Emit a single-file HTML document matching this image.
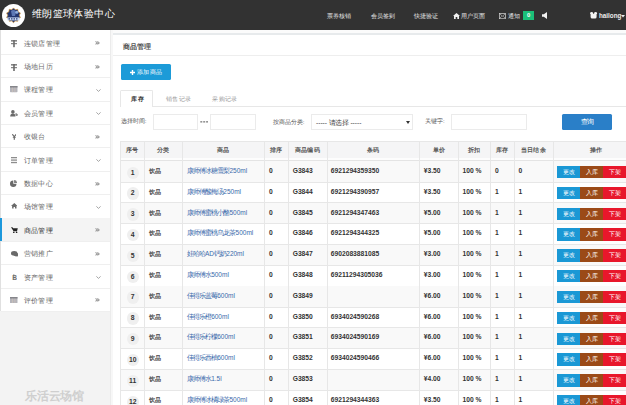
<!DOCTYPE html><html><head><meta charset="utf-8"><style>
*{margin:0;padding:0;box-sizing:border-box}
html,body{width:626px;height:405px;overflow:hidden;background:#f3f3f3;font-family:"Liberation Sans",sans-serif;position:relative}
.a{position:absolute;white-space:nowrap}
i{display:inline-block;width:1em;font-style:normal;text-align:center}
.nocjk i{-webkit-text-fill-color:transparent;position:relative}
.nocjk i::before{content:'';position:absolute;left:.08em;right:.08em;bottom:.1em;height:.94em;background:currentColor;opacity:.36}
#hdr{left:0;top:0;width:626px;height:29.5px;background:#323232}
.nav{color:#e8e8e8;font-size:6.1px;top:12.4px;line-height:7px}
#side{left:0;top:29.5px;width:110.3px;height:281.3px;background:#fff;border-left:1.4px solid #e0e0e0}
.sep{left:1.4px;width:109px;height:1px;background:#efefef}
.stxt{color:#666;font-size:7.1px;line-height:8px}
.sico{color:#666;font-size:7px;line-height:8px}
.sarr{color:#999;font-size:7px;line-height:8px}
#strip{left:110.3px;top:29.5px;width:2.6px;height:376px;background:#f7f7f7}
#panel{left:112.9px;top:33.1px;width:514px;height:380px;background:#fff;border-top:2px solid #e7eaec}
.th{background:#f5f5f6}
.cell{font-size:6.7px;color:#333;font-weight:bold;line-height:8px}
.cj{font-size:6.2px;color:#4a4a4a;font-weight:bold;line-height:8px}
.lnk{font-size:6.5px;color:#3a6aab;line-height:8px}
.lnk i{width:.94em}
.vl{width:1px;background:#e7e7e7}
.hl{height:1px;background:#e7e7e7}
.badge{width:12.4px;height:12.4px;border-radius:50%;background:#efefef;color:#333;font-size:6.8px;font-weight:bold;line-height:12.4px;text-align:center}
.btn{height:12.4px;color:#fff;font-size:6px;line-height:12.4px;text-align:center}
.inp{border:1px solid #ebebeb;background:#fff;height:15.4px}
.lbl{font-size:6px;color:#555;line-height:7px}
</style></head><body>
<div id="hdr" class="a"></div>
<div class="a" style="left:1.9px;top:3.5px;width:23.6px;height:23.6px;border-radius:50%;background:#fff"></div>
<svg class="a" style="left:6px;top:7px" width="15" height="17" viewBox="0 0 15 17"><polygon points="7.50,0.90 9.29,2.69 11.76,2.31 12.18,4.83 14.40,6.01 13.28,8.30 14.40,10.59 12.18,11.77 11.76,14.29 9.29,13.91 7.50,15.70 5.71,13.91 3.24,14.29 2.82,11.77 0.60,10.59 1.72,8.30 0.60,6.01 2.82,4.83 3.24,2.31 5.71,2.69" fill="#22356f" stroke="#d99a3c" stroke-width="0.7"/><path d="M5 4 Q7.5 2 10 4.5 L9 9 L6 9 Z" fill="#5d78b4"/><circle cx="10.8" cy="5.2" r="1.5" fill="#8fb0e0"/><rect x="1.4" y="10.4" width="12.2" height="3" fill="#c9d9f2"/><path d="M2.5 11.2 h1.5 v1.4 h-1.5z M5 11.2 h1.5 v1.4 h-1.5z M7.5 11.2 h1.5 v1.4 h-1.5z M10 11.2 h1.5 v1.4 h-1.5z" fill="#2a3d78"/></svg>
<div class="a" style="left:31.6px;top:8.4px;color:#fff;font-size:10.4px;line-height:12px"><i>维</i><i>朗</i><i>篮</i><i>球</i><i>体</i><i>验</i><i>中</i><i>心</i></div>
<div class="a nav" style="left:326.6px"><i>票</i><i>券</i><i>核</i><i>销</i></div>
<div class="a nav" style="left:370.5px"><i>会</i><i>员</i><i>签</i><i>到</i></div>
<div class="a nav" style="left:413.8px"><i>快</i><i>捷</i><i>验</i><i>证</i></div>
<div class="a nav" style="left:460.5px"><i>用</i><i>户</i><i>页</i><i>面</i></div>
<div class="a nav" style="left:507.5px"><i>通</i><i>知</i></div>
<svg class="a" style="left:453px;top:12.6px" width="7" height="6" viewBox="0 0 7 6"><path d="M3.5 0 L7 3 L6 3 L6 6 L4.3 6 L4.3 4 L2.7 4 L2.7 6 L1 6 L1 3 L0 3 Z" fill="#f0f0f0"/></svg>
<svg class="a" style="left:499px;top:12.7px" width="7" height="6.2" viewBox="0 0 7 6.2"><rect x="0.45" y="0.45" width="6.1" height="5.3" fill="none" stroke="#d8d8d8" stroke-width="0.7"/><path d="M0.7 0.9 L3.5 3.1 L6.3 0.9 M0.8 5.3 L2.7 3.3 M6.2 5.3 L4.3 3.3" fill="none" stroke="#d0d0d0" stroke-width="0.6"/></svg>
<div class="a" style="left:523.2px;top:10.7px;width:11.1px;height:9px;background:#1bbf79;color:#fff;font-size:5.8px;font-weight:bold;line-height:9px;text-align:center">0</div>
<svg class="a" style="left:541.5px;top:12.2px" width="5.5" height="7" viewBox="0 0 5.5 7"><path d="M0 2.2 L1.8 2.2 L5 0 L5 7 L1.8 4.8 L0 4.8 Z" fill="#f2f2f2"/></svg>
<svg class="a" style="left:590.4px;top:12.4px" width="7.2" height="6.6" viewBox="0 0 7.2 6.6"><circle cx="1.6" cy="1.6" r="1.5" fill="#f4f4f4"/><circle cx="5.6" cy="1.6" r="1.5" fill="#f4f4f4"/><rect x="0.6" y="1.8" width="6" height="4.8" rx="1.6" fill="#f4f4f4"/></svg>
<div class="a" style="left:599px;top:11.6px;color:#eee;font-size:6.3px;font-weight:bold;line-height:8px">hailong</div>
<svg class="a" style="left:621.2px;top:14.8px" width="4" height="3" viewBox="0 0 4 3"><path d="M0 0 L4 0 L2 2.4 Z" fill="#eee"/></svg>
<div id="side" class="a"></div>
<div id="strip" class="a"></div>
<div class="a" style="left:109.6px;top:29.5px;width:1px;height:376px;background:#ebebeb"></div>
<div class="a sep" style="top:53.79px"></div>
<div class="a stxt" style="left:24.2px;top:39.59px;color:#666"><i>连</i><i>锁</i><i>店</i><i>管</i><i>理</i></div>
<svg class="a" style="left:10.8px;top:40.2px" width="6.4" height="7.4" viewBox="0 0 6.4 7.4"><rect x="0" y="0.2" width="6.2" height="1.3" fill="#6a6a6a"/><rect x="0" y="3.2" width="6.2" height="1.0" fill="#6a6a6a"/><rect x="2.2" y="0" width="1.6" height="7.2" fill="#6a6a6a"/></svg>
<svg class="a" style="left:95.4px;top:41.2px" width="5" height="4" viewBox="0 0 5 4"><path d="M0.5 0.4 L2.3 1.9 L0.5 3.4 M2.4 0.4 L4.2 1.9 L2.4 3.4" fill="none" stroke="#9a9a9a" stroke-width="1.05"/></svg>
<div class="a sep" style="top:77.18px"></div>
<div class="a stxt" style="left:24.2px;top:62.98px;color:#666"><i>场</i><i>地</i><i>日</i><i>历</i></div>
<svg class="a" style="left:10.8px;top:63.59px" width="6.4" height="7.4" viewBox="0 0 6.4 7.4"><rect x="0" y="0.2" width="6.2" height="1.3" fill="#6a6a6a"/><rect x="0" y="3.2" width="6.2" height="1.0" fill="#6a6a6a"/><rect x="2.2" y="0" width="1.6" height="7.2" fill="#6a6a6a"/></svg>
<svg class="a" style="left:95.4px;top:64.59px" width="5" height="4" viewBox="0 0 5 4"><path d="M0.5 0.4 L2.3 1.9 L0.5 3.4 M2.4 0.4 L4.2 1.9 L2.4 3.4" fill="none" stroke="#9a9a9a" stroke-width="1.05"/></svg>
<div class="a sep" style="top:100.57px"></div>
<div class="a stxt" style="left:24.2px;top:86.38px;color:#666"><i>课</i><i>程</i><i>管</i><i>理</i></div>
<svg class="a" style="left:10.3px;top:86.38px" width="7.5" height="6.2" viewBox="0 0 7.5 6.2"><rect x="0" y="0" width="7.5" height="6.2" rx="0.6" fill="#b4b4ba"/><rect x="0" y="0" width="7.5" height="1.5" fill="#85858a"/><rect x="2.3" y="1.6" width="0.5" height="4.6" fill="#d9c8b8"/><rect x="4.7" y="1.6" width="0.5" height="4.6" fill="#d9c8b8"/></svg>
<svg class="a" style="left:95.6px;top:88.78px" width="5" height="3" viewBox="0 0 5 3"><path d="M0.4 0.4 L2.5 2.4 L4.6 0.4" fill="none" stroke="#9a9a9a" stroke-width="0.9"/></svg>
<div class="a sep" style="top:123.96px"></div>
<div class="a stxt" style="left:24.2px;top:109.76px;color:#666"><i>会</i><i>员</i><i>管</i><i>理</i></div>
<svg class="a" style="left:9.7px;top:109.66px" width="8.6" height="7" viewBox="0 0 8.6 7"><circle cx="2.9" cy="1.9" r="1.8" fill="#6a6a6a"/><path d="M0.2 6.4 Q0.2 3.5 2.9 3.5 Q5.4 3.5 5.5 6.4 Z" fill="#6a6a6a"/><path d="M5.2 3.6 Q6.8 2.6 7.4 4.2 L8.4 4.9 L7.2 5.8 Q6 6.3 5.6 5.6 Z" fill="#6a6a6a" opacity=".8"/></svg>
<svg class="a" style="left:95.6px;top:112.16px" width="5" height="3" viewBox="0 0 5 3"><path d="M0.4 0.4 L2.5 2.4 L4.6 0.4" fill="none" stroke="#9a9a9a" stroke-width="0.9"/></svg>
<div class="a sep" style="top:147.35px"></div>
<div class="a stxt" style="left:24.2px;top:133.16px;color:#666"><i>收</i><i>银</i><i>台</i></div>
<svg class="a" style="left:11.9px;top:133.75px" width="4.6" height="5.8" viewBox="0 0 4.6 5.8"><path d="M0.3 0.2 L2.3 2.8 L4.3 0.2" fill="none" stroke="#6a6a6a" stroke-width="1.2"/><rect x="1.7" y="2.6" width="1.2" height="3.2" fill="#6a6a6a"/><rect x="0.8" y="3.2" width="3" height="0.7" fill="#6a6a6a"/></svg>
<svg class="a" style="left:95.4px;top:134.76px" width="5" height="4" viewBox="0 0 5 4"><path d="M0.5 0.4 L2.3 1.9 L0.5 3.4 M2.4 0.4 L4.2 1.9 L2.4 3.4" fill="none" stroke="#9a9a9a" stroke-width="1.05"/></svg>
<div class="a sep" style="top:170.74px"></div>
<div class="a stxt" style="left:24.2px;top:156.54px;color:#666"><i>订</i><i>单</i><i>管</i><i>理</i></div>
<svg class="a" style="left:11.1px;top:157.44px" width="6.2" height="6.2" viewBox="0 0 6.2 6.2"><rect x="0" y="0" width="6.2" height="1.3" fill="#8d8d8d"/><rect x="0" y="2.45" width="6.2" height="1.3" fill="#8d8d8d"/><rect x="0" y="4.9" width="6.2" height="1.3" fill="#8d8d8d"/></svg>
<svg class="a" style="left:95.6px;top:158.94px" width="5" height="3" viewBox="0 0 5 3"><path d="M0.4 0.4 L2.5 2.4 L4.6 0.4" fill="none" stroke="#9a9a9a" stroke-width="0.9"/></svg>
<div class="a sep" style="top:194.13px"></div>
<div class="a stxt" style="left:24.2px;top:179.94px;color:#666"><i>数</i><i>据</i><i>中</i><i>心</i></div>
<svg class="a" style="left:10.2px;top:180.03px" width="7.2" height="7" viewBox="0 0 7.2 7"><path d="M3.3 0.4 L3.3 3.7 L6.5 3.7 A3.25 3.25 0 1 1 3.3 0.4 Z" fill="#6a6a6a"/><path d="M4.1 0.1 A3.1 3.1 0 0 1 7.1 3.0 L4.1 3.0 Z" fill="#6a6a6a" opacity=".85"/></svg>
<svg class="a" style="left:95.4px;top:181.54px" width="5" height="4" viewBox="0 0 5 4"><path d="M0.5 0.4 L2.3 1.9 L0.5 3.4 M2.4 0.4 L4.2 1.9 L2.4 3.4" fill="none" stroke="#9a9a9a" stroke-width="1.05"/></svg>
<div class="a sep" style="top:217.52px"></div>
<div class="a stxt" style="left:24.2px;top:203.33px;color:#666"><i>场</i><i>馆</i><i>管</i><i>理</i></div>
<svg class="a" style="left:10.9px;top:203.43px" width="6.6" height="5.6" viewBox="0 0 6.6 5.6"><path d="M3.3 0 L6.6 3 L5.5 3 L5.5 5.6 L4 5.6 L4 4 L2.6 4 L2.6 5.6 L1.1 5.6 L1.1 3 L0 3 Z" fill="#6a6a6a"/></svg>
<svg class="a" style="left:95.6px;top:205.73px" width="5" height="3" viewBox="0 0 5 3"><path d="M0.4 0.4 L2.5 2.4 L4.6 0.4" fill="none" stroke="#9a9a9a" stroke-width="0.9"/></svg>
<div class="a" style="left:1.4px;top:218.02px;width:109px;height:23.39px;background:#f4f4f4"></div>
<div class="a" style="left:0;top:218.02px;width:1.6px;height:23.39px;background:#1c98dc"></div>
<div class="a sep" style="top:240.91px"></div>
<div class="a stxt" style="left:24.2px;top:226.72px;color:#333"><i>商</i><i>品</i><i>管</i><i>理</i></div>
<svg class="a" style="left:11.1px;top:227.02px" width="6.8" height="6.2" viewBox="0 0 6.8 6.2"><path d="M0 0.3 L1.4 0.3 L2.2 1.3 L6.8 1.3 L6 4.3 L2.6 4.3 Z" fill="#222"/><circle cx="2.8" cy="5.4" r="0.8" fill="#222"/><circle cx="5.6" cy="5.4" r="0.8" fill="#222"/></svg>
<svg class="a" style="left:95.4px;top:228.32px" width="5" height="4" viewBox="0 0 5 4"><path d="M0.5 0.4 L2.3 1.9 L0.5 3.4 M2.4 0.4 L4.2 1.9 L2.4 3.4" fill="none" stroke="#9a9a9a" stroke-width="1.05"/></svg>
<div class="a sep" style="top:264.3px"></div>
<div class="a stxt" style="left:24.2px;top:250.1px;color:#666"><i>营</i><i>销</i><i>推</i><i>广</i></div>
<svg class="a" style="left:10.6px;top:251.2px" width="7.4" height="5.8" viewBox="0 0 7.4 5.8"><ellipse cx="3.2" cy="2.4" rx="3.2" ry="2.3" fill="#6a6a6a"/><ellipse cx="5" cy="3.6" rx="2.4" ry="1.8" fill="#6a6a6a"/><path d="M5.5 4.5 L7.2 5.8 L6 3.8 Z" fill="#6a6a6a"/></svg>
<svg class="a" style="left:95.4px;top:251.71px" width="5" height="4" viewBox="0 0 5 4"><path d="M0.5 0.4 L2.3 1.9 L0.5 3.4 M2.4 0.4 L4.2 1.9 L2.4 3.4" fill="none" stroke="#9a9a9a" stroke-width="1.05"/></svg>
<div class="a sep" style="top:287.69px"></div>
<div class="a stxt" style="left:24.2px;top:273.5px;color:#666"><i>资</i><i>产</i><i>管</i><i>理</i></div>
<svg class="a" style="left:11.9px;top:273.79px" width="5.2" height="6.4" viewBox="0 0 5.2 6.4"><text x="0.3" y="5.6" font-family="Liberation Sans" font-weight="bold" font-size="6.6" fill="#6f6f6f">B</text><rect x="1.6" y="0" width="0.6" height="6.4" fill="#6f6f6f"/></svg>
<svg class="a" style="left:95.6px;top:275.89px" width="5" height="3" viewBox="0 0 5 3"><path d="M0.4 0.4 L2.5 2.4 L4.6 0.4" fill="none" stroke="#9a9a9a" stroke-width="0.9"/></svg>
<div class="a sep" style="top:311.08px"></div>
<div class="a stxt" style="left:24.2px;top:296.88px;color:#666"><i>评</i><i>价</i><i>管</i><i>理</i></div>
<svg class="a" style="left:10.3px;top:296.88px" width="7.5" height="6.2" viewBox="0 0 7.5 6.2"><rect x="0" y="0" width="7.5" height="6.2" rx="0.6" fill="#b4b4ba"/><rect x="0" y="0" width="7.5" height="1.5" fill="#85858a"/><rect x="2.3" y="1.6" width="0.5" height="4.6" fill="#d9c8b8"/><rect x="4.7" y="1.6" width="0.5" height="4.6" fill="#d9c8b8"/></svg>
<svg class="a" style="left:95.4px;top:298.49px" width="5" height="4" viewBox="0 0 5 4"><path d="M0.5 0.4 L2.3 1.9 L0.5 3.4 M2.4 0.4 L4.2 1.9 L2.4 3.4" fill="none" stroke="#9a9a9a" stroke-width="1.05"/></svg>
<div class="a" style="left:25px;top:389.8px;color:#cfcfcf;font-size:11.8px;font-weight:bold;line-height:13px"><i>乐</i><i>活</i><i>云</i><i>场</i><i>馆</i></div>
<div class="a" style="left:112.9px;top:29.5px;width:514px;height:4px;background:#fbfbfb"></div>
<div id="panel" class="a"></div>
<div class="a" style="left:122.8px;top:43.4px;font-size:7.1px;color:#555;font-weight:bold;line-height:8px"><i>商</i><i>品</i><i>管</i><i>理</i></div>
<div class="a hl" style="left:112.9px;top:54.6px;width:514px;background:#eeeeee"></div>
<div class="a" style="left:120.6px;top:63.6px;width:50.4px;height:16.3px;background:#1c9bd8;border-radius:1.5px"></div>
<svg class="a" style="left:129.8px;top:69.5px" width="5" height="5" viewBox="0 0 5 5"><path d="M0 2.5 L5 2.5 M2.5 0 L2.5 5" stroke="#fff" stroke-width="1.4"/></svg>
<div class="a" style="left:137.1px;top:67.8px;color:#fff;font-size:6.3px;letter-spacing:0.1px;line-height:8px"><i>添</i><i>加</i><i>商</i><i>品</i></div>
<div class="a hl" style="left:120.2px;top:105.6px;width:506px;background:#e7e7e7"></div>
<div class="a" style="left:120.2px;top:90.4px;width:33.2px;height:16.2px;background:#fff;border:1px solid #e7e7e7;border-bottom:none;border-radius:1.5px 1.5px 0 0"></div>
<div class="a" style="left:131.2px;top:95px;font-size:6.3px;color:#333;font-weight:bold;line-height:8px"><i>库</i><i>存</i></div>
<div class="a" style="left:165.6px;top:95px;font-size:6.4px;color:#9a9a9a;line-height:8px"><i>销</i><i>售</i><i>记</i><i>录</i></div>
<div class="a" style="left:212px;top:95px;font-size:6.4px;color:#9a9a9a;line-height:8px"><i>采</i><i>购</i><i>记</i><i>录</i></div>
<div class="a lbl" style="left:120.7px;top:118.2px"><i>选</i><i>择</i><i>时</i><i>间</i>:</div>
<div class="a inp" style="left:153.2px;top:114.2px;width:45.2px"></div>
<svg class="a" style="left:200px;top:120.8px" width="8.4" height="2" viewBox="0 0 8.4 2"><rect x="0.3" y="0.2" width="2" height="1.3" fill="#7a7a7a"/><rect x="3.2" y="0.2" width="2" height="1.3" fill="#7a7a7a"/><rect x="6.1" y="0.2" width="2" height="1.3" fill="#7a7a7a"/></svg>
<div class="a inp" style="left:210px;top:114.2px;width:45.5px"></div>
<div class="a lbl" style="left:272.7px;top:118.6px"><i>按</i><i>商</i><i>品</i><i>分</i><i>类</i>:</div>
<div class="a inp" style="left:311px;top:114.4px;width:101.7px;height:16px"></div>
<div class="a lbl" style="left:316px;top:119.2px;color:#444;font-size:6.6px">----- <i>请</i><i>选</i><i>择</i> -----</div>
<svg class="a" style="left:405.6px;top:120.6px" width="4" height="3" viewBox="0 0 4 3"><path d="M0 0 L4 0 L2 3 Z" fill="#333"/></svg>
<div class="a lbl" style="left:425px;top:118px"><i>关</i><i>键</i><i>字</i>:</div>
<div class="a inp" style="left:451.4px;top:114.3px;width:75.8px"></div>
<div class="a" style="left:561.9px;top:114.2px;width:50.6px;height:16.3px;background:#2a7fc8;border-radius:1.5px;color:#fff;font-size:6.4px;line-height:16.3px;text-align:center;font-size:6.6px"><i>查</i><i>询</i></div>
<div class="a th" style="left:119.6px;top:140.6px;width:540.4px;height:17.2px"></div>
<div class="a hl" style="left:119.6px;top:140.6px;width:540.4px"></div>
<div class="a" style="left:119.6px;top:157.8px;width:540.4px;height:2.1px;background:#fdfdfd"></div>
<div class="a" style="left:119.6px;top:159.9px;width:540.4px;height:1.4px;background:#e4e4e4"></div>
<div class="a" style="left:131.75px;top:145.6px;width:60px;margin-left:-30px;text-align:center;font-size:6.3px;color:#555;font-weight:bold;line-height:8px"><i>序</i><i>号</i></div>
<div class="a" style="left:163px;top:145.6px;width:60px;margin-left:-30px;text-align:center;font-size:6.3px;color:#555;font-weight:bold;line-height:8px"><i>分</i><i>类</i></div>
<div class="a" style="left:223.05px;top:145.6px;width:60px;margin-left:-30px;text-align:center;font-size:6.3px;color:#555;font-weight:bold;line-height:8px"><i>商</i><i>品</i></div>
<div class="a" style="left:276.1px;top:145.6px;width:60px;margin-left:-30px;text-align:center;font-size:6.3px;color:#555;font-weight:bold;line-height:8px"><i>排</i><i>序</i></div>
<div class="a" style="left:307.35px;top:145.6px;width:60px;margin-left:-30px;text-align:center;font-size:6.3px;color:#555;font-weight:bold;line-height:8px"><i>商</i><i>品</i><i>编</i><i>码</i></div>
<div class="a" style="left:372.95px;top:145.6px;width:60px;margin-left:-30px;text-align:center;font-size:6.3px;color:#555;font-weight:bold;line-height:8px"><i>条</i><i>码</i></div>
<div class="a" style="left:438.7px;top:145.6px;width:60px;margin-left:-30px;text-align:center;font-size:6.3px;color:#555;font-weight:bold;line-height:8px"><i>单</i><i>价</i></div>
<div class="a" style="left:474.15px;top:145.6px;width:60px;margin-left:-30px;text-align:center;font-size:6.3px;color:#555;font-weight:bold;line-height:8px"><i>折</i><i>扣</i></div>
<div class="a" style="left:501.95px;top:145.6px;width:60px;margin-left:-30px;text-align:center;font-size:6.3px;color:#555;font-weight:bold;line-height:8px"><i>库</i><i>存</i></div>
<div class="a" style="left:533.25px;top:145.6px;width:60px;margin-left:-30px;text-align:center;font-size:6.3px;color:#555;font-weight:bold;line-height:8px"><i>当</i><i>日</i><i>结</i><i>余</i></div>
<div class="a" style="left:596.2px;top:145.6px;width:60px;margin-left:-30px;text-align:center;font-size:6.3px;color:#555;font-weight:bold;line-height:8px"><i>操</i><i>作</i></div>
<div class="a" style="left:119.6px;top:161.3px;width:540.4px;height:20.82px;background:#f9f9f9"></div>
<div class="a hl" style="left:119.6px;top:181.62px;width:540.4px"></div>
<div class="a badge" style="left:126.5px;top:166.5px">1</div>
<div class="a cj" style="left:148.8px;top:166.9px"><i>饮</i><i>品</i></div>
<div class="a lnk" style="left:186.7px;top:166.9px"><i>康</i><i>师</i><i>傅</i><i>冰</i><i>糖</i><i>雪</i><i>梨</i>250ml</div>
<div class="a cell" style="left:269px;top:166.9px">0</div>
<div class="a cell" style="left:292.7px;top:166.9px">G3843</div>
<div class="a cell" style="left:330.8px;top:166.9px">6921294359350</div>
<div class="a cell" style="left:423.8px;top:166.9px">¥3.50</div>
<div class="a cell" style="left:462.5px;top:166.9px">100 %</div>
<div class="a cell" style="left:494.9px;top:166.9px">0</div>
<div class="a cell" style="left:518.5px;top:166.9px">0</div>
<div class="a btn" style="left:557.2px;top:166px;width:22.9px;background:#1a98d5"><i>更</i><i>改</i></div>
<div class="a btn" style="left:580.1px;top:166px;width:23px;background:#9b4a17"><i>入</i><i>库</i></div>
<div class="a btn" style="left:603.1px;top:166px;width:23px;background:#e8172b"><i>下</i><i>架</i></div>
<div class="a hl" style="left:119.6px;top:202.44px;width:540.4px"></div>
<div class="a badge" style="left:126.5px;top:187.32px">2</div>
<div class="a cj" style="left:148.8px;top:187.72px"><i>饮</i><i>品</i></div>
<div class="a lnk" style="left:186.7px;top:187.72px"><i>康</i><i>师</i><i>傅</i><i>酸</i><i>梅</i><i>汤</i>250ml</div>
<div class="a cell" style="left:269px;top:187.72px">0</div>
<div class="a cell" style="left:292.7px;top:187.72px">G3844</div>
<div class="a cell" style="left:330.8px;top:187.72px">6921294390957</div>
<div class="a cell" style="left:423.8px;top:187.72px">¥3.50</div>
<div class="a cell" style="left:462.5px;top:187.72px">100 %</div>
<div class="a cell" style="left:494.9px;top:187.72px">1</div>
<div class="a cell" style="left:518.5px;top:187.72px">1</div>
<div class="a btn" style="left:557.2px;top:186.82px;width:22.9px;background:#1a98d5"><i>更</i><i>改</i></div>
<div class="a btn" style="left:580.1px;top:186.82px;width:23px;background:#9b4a17"><i>入</i><i>库</i></div>
<div class="a btn" style="left:603.1px;top:186.82px;width:23px;background:#e8172b"><i>下</i><i>架</i></div>
<div class="a" style="left:119.6px;top:202.94px;width:540.4px;height:20.82px;background:#f9f9f9"></div>
<div class="a hl" style="left:119.6px;top:223.26px;width:540.4px"></div>
<div class="a badge" style="left:126.5px;top:208.14px">3</div>
<div class="a cj" style="left:148.8px;top:208.54px"><i>饮</i><i>品</i></div>
<div class="a lnk" style="left:186.7px;top:208.54px"><i>康</i><i>师</i><i>傅</i><i>蜜</i><i>桃</i><i>小</i><i>酪</i>500ml</div>
<div class="a cell" style="left:269px;top:208.54px">0</div>
<div class="a cell" style="left:292.7px;top:208.54px">G3845</div>
<div class="a cell" style="left:330.8px;top:208.54px">6921294347463</div>
<div class="a cell" style="left:423.8px;top:208.54px">¥5.00</div>
<div class="a cell" style="left:462.5px;top:208.54px">100 %</div>
<div class="a cell" style="left:494.9px;top:208.54px">1</div>
<div class="a cell" style="left:518.5px;top:208.54px">1</div>
<div class="a btn" style="left:557.2px;top:207.64px;width:22.9px;background:#1a98d5"><i>更</i><i>改</i></div>
<div class="a btn" style="left:580.1px;top:207.64px;width:23px;background:#9b4a17"><i>入</i><i>库</i></div>
<div class="a btn" style="left:603.1px;top:207.64px;width:23px;background:#e8172b"><i>下</i><i>架</i></div>
<div class="a hl" style="left:119.6px;top:244.08px;width:540.4px"></div>
<div class="a badge" style="left:126.5px;top:228.96px">4</div>
<div class="a cj" style="left:148.8px;top:229.36px"><i>饮</i><i>品</i></div>
<div class="a lnk" style="left:186.7px;top:229.36px"><i>康</i><i>师</i><i>傅</i><i>蜜</i><i>桃</i><i>乌</i><i>龙</i><i>茶</i>500ml</div>
<div class="a cell" style="left:269px;top:229.36px">0</div>
<div class="a cell" style="left:292.7px;top:229.36px">G3846</div>
<div class="a cell" style="left:330.8px;top:229.36px">6921294344325</div>
<div class="a cell" style="left:423.8px;top:229.36px">¥5.00</div>
<div class="a cell" style="left:462.5px;top:229.36px">100 %</div>
<div class="a cell" style="left:494.9px;top:229.36px">1</div>
<div class="a cell" style="left:518.5px;top:229.36px">1</div>
<div class="a btn" style="left:557.2px;top:228.46px;width:22.9px;background:#1a98d5"><i>更</i><i>改</i></div>
<div class="a btn" style="left:580.1px;top:228.46px;width:23px;background:#9b4a17"><i>入</i><i>库</i></div>
<div class="a btn" style="left:603.1px;top:228.46px;width:23px;background:#e8172b"><i>下</i><i>架</i></div>
<div class="a" style="left:119.6px;top:244.58px;width:540.4px;height:20.82px;background:#f9f9f9"></div>
<div class="a hl" style="left:119.6px;top:264.9px;width:540.4px"></div>
<div class="a badge" style="left:126.5px;top:249.78px">5</div>
<div class="a cj" style="left:148.8px;top:250.18px"><i>饮</i><i>品</i></div>
<div class="a lnk" style="left:186.7px;top:250.18px"><i>娃</i><i>哈</i><i>哈</i>AD<i>钙</i><i>奶</i>220ml</div>
<div class="a cell" style="left:269px;top:250.18px">0</div>
<div class="a cell" style="left:292.7px;top:250.18px">G3847</div>
<div class="a cell" style="left:330.8px;top:250.18px">6902083881085</div>
<div class="a cell" style="left:423.8px;top:250.18px">¥3.00</div>
<div class="a cell" style="left:462.5px;top:250.18px">100 %</div>
<div class="a cell" style="left:494.9px;top:250.18px">1</div>
<div class="a cell" style="left:518.5px;top:250.18px">1</div>
<div class="a btn" style="left:557.2px;top:249.28px;width:22.9px;background:#1a98d5"><i>更</i><i>改</i></div>
<div class="a btn" style="left:580.1px;top:249.28px;width:23px;background:#9b4a17"><i>入</i><i>库</i></div>
<div class="a btn" style="left:603.1px;top:249.28px;width:23px;background:#e8172b"><i>下</i><i>架</i></div>
<div class="a hl" style="left:119.6px;top:285.72px;width:540.4px"></div>
<div class="a badge" style="left:126.5px;top:270.6px">6</div>
<div class="a cj" style="left:148.8px;top:271px"><i>饮</i><i>品</i></div>
<div class="a lnk" style="left:186.7px;top:271px"><i>康</i><i>师</i><i>傅</i><i>水</i>500ml</div>
<div class="a cell" style="left:269px;top:271px">0</div>
<div class="a cell" style="left:292.7px;top:271px">G3848</div>
<div class="a cell" style="left:330.8px;top:271px">69211294305036</div>
<div class="a cell" style="left:423.8px;top:271px">¥3.00</div>
<div class="a cell" style="left:462.5px;top:271px">100 %</div>
<div class="a cell" style="left:494.9px;top:271px">1</div>
<div class="a cell" style="left:518.5px;top:271px">1</div>
<div class="a btn" style="left:557.2px;top:270.1px;width:22.9px;background:#1a98d5"><i>更</i><i>改</i></div>
<div class="a btn" style="left:580.1px;top:270.1px;width:23px;background:#9b4a17"><i>入</i><i>库</i></div>
<div class="a btn" style="left:603.1px;top:270.1px;width:23px;background:#e8172b"><i>下</i><i>架</i></div>
<div class="a" style="left:119.6px;top:286.22px;width:540.4px;height:20.82px;background:#f9f9f9"></div>
<div class="a hl" style="left:119.6px;top:306.54px;width:540.4px"></div>
<div class="a badge" style="left:126.5px;top:291.42px">7</div>
<div class="a cj" style="left:148.8px;top:291.82px"><i>饮</i><i>品</i></div>
<div class="a lnk" style="left:186.7px;top:291.82px"><i>佳</i><i>得</i><i>乐</i><i>蓝</i><i>莓</i>600ml</div>
<div class="a cell" style="left:269px;top:291.82px">0</div>
<div class="a cell" style="left:292.7px;top:291.82px">G3849</div>
<div class="a cell" style="left:423.8px;top:291.82px">¥6.00</div>
<div class="a cell" style="left:462.5px;top:291.82px">100 %</div>
<div class="a cell" style="left:494.9px;top:291.82px">1</div>
<div class="a cell" style="left:518.5px;top:291.82px">1</div>
<div class="a btn" style="left:557.2px;top:290.92px;width:22.9px;background:#1a98d5"><i>更</i><i>改</i></div>
<div class="a btn" style="left:580.1px;top:290.92px;width:23px;background:#9b4a17"><i>入</i><i>库</i></div>
<div class="a btn" style="left:603.1px;top:290.92px;width:23px;background:#e8172b"><i>下</i><i>架</i></div>
<div class="a hl" style="left:119.6px;top:327.36px;width:540.4px"></div>
<div class="a badge" style="left:126.5px;top:312.24px">8</div>
<div class="a cj" style="left:148.8px;top:312.64px"><i>饮</i><i>品</i></div>
<div class="a lnk" style="left:186.7px;top:312.64px"><i>佳</i><i>得</i><i>乐</i><i>橙</i>600ml</div>
<div class="a cell" style="left:269px;top:312.64px">0</div>
<div class="a cell" style="left:292.7px;top:312.64px">G3850</div>
<div class="a cell" style="left:330.8px;top:312.64px">6934024590268</div>
<div class="a cell" style="left:423.8px;top:312.64px">¥6.00</div>
<div class="a cell" style="left:462.5px;top:312.64px">100 %</div>
<div class="a cell" style="left:494.9px;top:312.64px">1</div>
<div class="a cell" style="left:518.5px;top:312.64px">1</div>
<div class="a btn" style="left:557.2px;top:311.74px;width:22.9px;background:#1a98d5"><i>更</i><i>改</i></div>
<div class="a btn" style="left:580.1px;top:311.74px;width:23px;background:#9b4a17"><i>入</i><i>库</i></div>
<div class="a btn" style="left:603.1px;top:311.74px;width:23px;background:#e8172b"><i>下</i><i>架</i></div>
<div class="a" style="left:119.6px;top:327.86px;width:540.4px;height:20.82px;background:#f9f9f9"></div>
<div class="a hl" style="left:119.6px;top:348.18px;width:540.4px"></div>
<div class="a badge" style="left:126.5px;top:333.06px">9</div>
<div class="a cj" style="left:148.8px;top:333.46px"><i>饮</i><i>品</i></div>
<div class="a lnk" style="left:186.7px;top:333.46px"><i>佳</i><i>得</i><i>乐</i><i>柠</i><i>檬</i>600ml</div>
<div class="a cell" style="left:269px;top:333.46px">0</div>
<div class="a cell" style="left:292.7px;top:333.46px">G3851</div>
<div class="a cell" style="left:330.8px;top:333.46px">6934024590169</div>
<div class="a cell" style="left:423.8px;top:333.46px">¥6.00</div>
<div class="a cell" style="left:462.5px;top:333.46px">100 %</div>
<div class="a cell" style="left:494.9px;top:333.46px">1</div>
<div class="a cell" style="left:518.5px;top:333.46px">1</div>
<div class="a btn" style="left:557.2px;top:332.56px;width:22.9px;background:#1a98d5"><i>更</i><i>改</i></div>
<div class="a btn" style="left:580.1px;top:332.56px;width:23px;background:#9b4a17"><i>入</i><i>库</i></div>
<div class="a btn" style="left:603.1px;top:332.56px;width:23px;background:#e8172b"><i>下</i><i>架</i></div>
<div class="a hl" style="left:119.6px;top:369px;width:540.4px"></div>
<div class="a badge" style="left:126.5px;top:353.88px">10</div>
<div class="a cj" style="left:148.8px;top:354.28px"><i>饮</i><i>品</i></div>
<div class="a lnk" style="left:186.7px;top:354.28px"><i>佳</i><i>得</i><i>乐</i><i>西</i><i>柚</i>600ml</div>
<div class="a cell" style="left:269px;top:354.28px">0</div>
<div class="a cell" style="left:292.7px;top:354.28px">G3852</div>
<div class="a cell" style="left:330.8px;top:354.28px">6934024590466</div>
<div class="a cell" style="left:423.8px;top:354.28px">¥6.00</div>
<div class="a cell" style="left:462.5px;top:354.28px">100 %</div>
<div class="a cell" style="left:494.9px;top:354.28px">1</div>
<div class="a cell" style="left:518.5px;top:354.28px">1</div>
<div class="a btn" style="left:557.2px;top:353.38px;width:22.9px;background:#1a98d5"><i>更</i><i>改</i></div>
<div class="a btn" style="left:580.1px;top:353.38px;width:23px;background:#9b4a17"><i>入</i><i>库</i></div>
<div class="a btn" style="left:603.1px;top:353.38px;width:23px;background:#e8172b"><i>下</i><i>架</i></div>
<div class="a" style="left:119.6px;top:369.5px;width:540.4px;height:20.82px;background:#f9f9f9"></div>
<div class="a hl" style="left:119.6px;top:389.82px;width:540.4px"></div>
<div class="a badge" style="left:126.5px;top:374.7px">11</div>
<div class="a cj" style="left:148.8px;top:375.1px"><i>饮</i><i>品</i></div>
<div class="a lnk" style="left:186.7px;top:375.1px"><i>康</i><i>师</i><i>傅</i><i>水</i>1.5l</div>
<div class="a cell" style="left:269px;top:375.1px">0</div>
<div class="a cell" style="left:292.7px;top:375.1px">G3853</div>
<div class="a cell" style="left:423.8px;top:375.1px">¥4.00</div>
<div class="a cell" style="left:462.5px;top:375.1px">100 %</div>
<div class="a cell" style="left:494.9px;top:375.1px">1</div>
<div class="a cell" style="left:518.5px;top:375.1px">1</div>
<div class="a btn" style="left:557.2px;top:374.2px;width:22.9px;background:#1a98d5"><i>更</i><i>改</i></div>
<div class="a btn" style="left:580.1px;top:374.2px;width:23px;background:#9b4a17"><i>入</i><i>库</i></div>
<div class="a btn" style="left:603.1px;top:374.2px;width:23px;background:#e8172b"><i>下</i><i>架</i></div>
<div class="a hl" style="left:119.6px;top:410.64px;width:540.4px"></div>
<div class="a badge" style="left:126.5px;top:395.52px">12</div>
<div class="a cj" style="left:148.8px;top:395.92px"><i>饮</i><i>品</i></div>
<div class="a lnk" style="left:186.7px;top:395.92px"><i>康</i><i>师</i><i>傅</i><i>冰</i><i>橘</i><i>绿</i><i>茶</i>500ml</div>
<div class="a cell" style="left:269px;top:395.92px">0</div>
<div class="a cell" style="left:292.7px;top:395.92px">G3854</div>
<div class="a cell" style="left:330.8px;top:395.92px">6921294344363</div>
<div class="a cell" style="left:423.8px;top:395.92px">¥3.50</div>
<div class="a cell" style="left:462.5px;top:395.92px">100 %</div>
<div class="a cell" style="left:494.9px;top:395.92px">1</div>
<div class="a cell" style="left:518.5px;top:395.92px">1</div>
<div class="a btn" style="left:557.2px;top:395.02px;width:22.9px;background:#1a98d5"><i>更</i><i>改</i></div>
<div class="a btn" style="left:580.1px;top:395.02px;width:23px;background:#9b4a17"><i>入</i><i>库</i></div>
<div class="a btn" style="left:603.1px;top:395.02px;width:23px;background:#e8172b"><i>下</i><i>架</i></div>
<div class="a vl" style="left:119.6px;top:140.6px;height:264.4px"></div>
<div class="a vl" style="left:143.9px;top:140.6px;height:264.4px"></div>
<div class="a vl" style="left:182.1px;top:140.6px;height:264.4px"></div>
<div class="a vl" style="left:264px;top:140.6px;height:264.4px"></div>
<div class="a vl" style="left:288.2px;top:140.6px;height:264.4px"></div>
<div class="a vl" style="left:326.5px;top:140.6px;height:264.4px"></div>
<div class="a vl" style="left:419.4px;top:140.6px;height:264.4px"></div>
<div class="a vl" style="left:458px;top:140.6px;height:264.4px"></div>
<div class="a vl" style="left:490.3px;top:140.6px;height:264.4px"></div>
<div class="a vl" style="left:513.6px;top:140.6px;height:264.4px"></div>
<div class="a vl" style="left:552.9px;top:140.6px;height:264.4px"></div>
<script>
(function(){var t=document.createElement('span');t.style.cssText='position:absolute;left:-999px;top:0;font-family:"Liberation Sans";font-size:100px;white-space:nowrap';t.textContent='\u5546\u54c1\u7ba1\u7406';document.body.appendChild(t);var w=t.getBoundingClientRect().width;document.body.removeChild(t);if(w<380){document.documentElement.className='nocjk';}})();
</script>
</body></html>
